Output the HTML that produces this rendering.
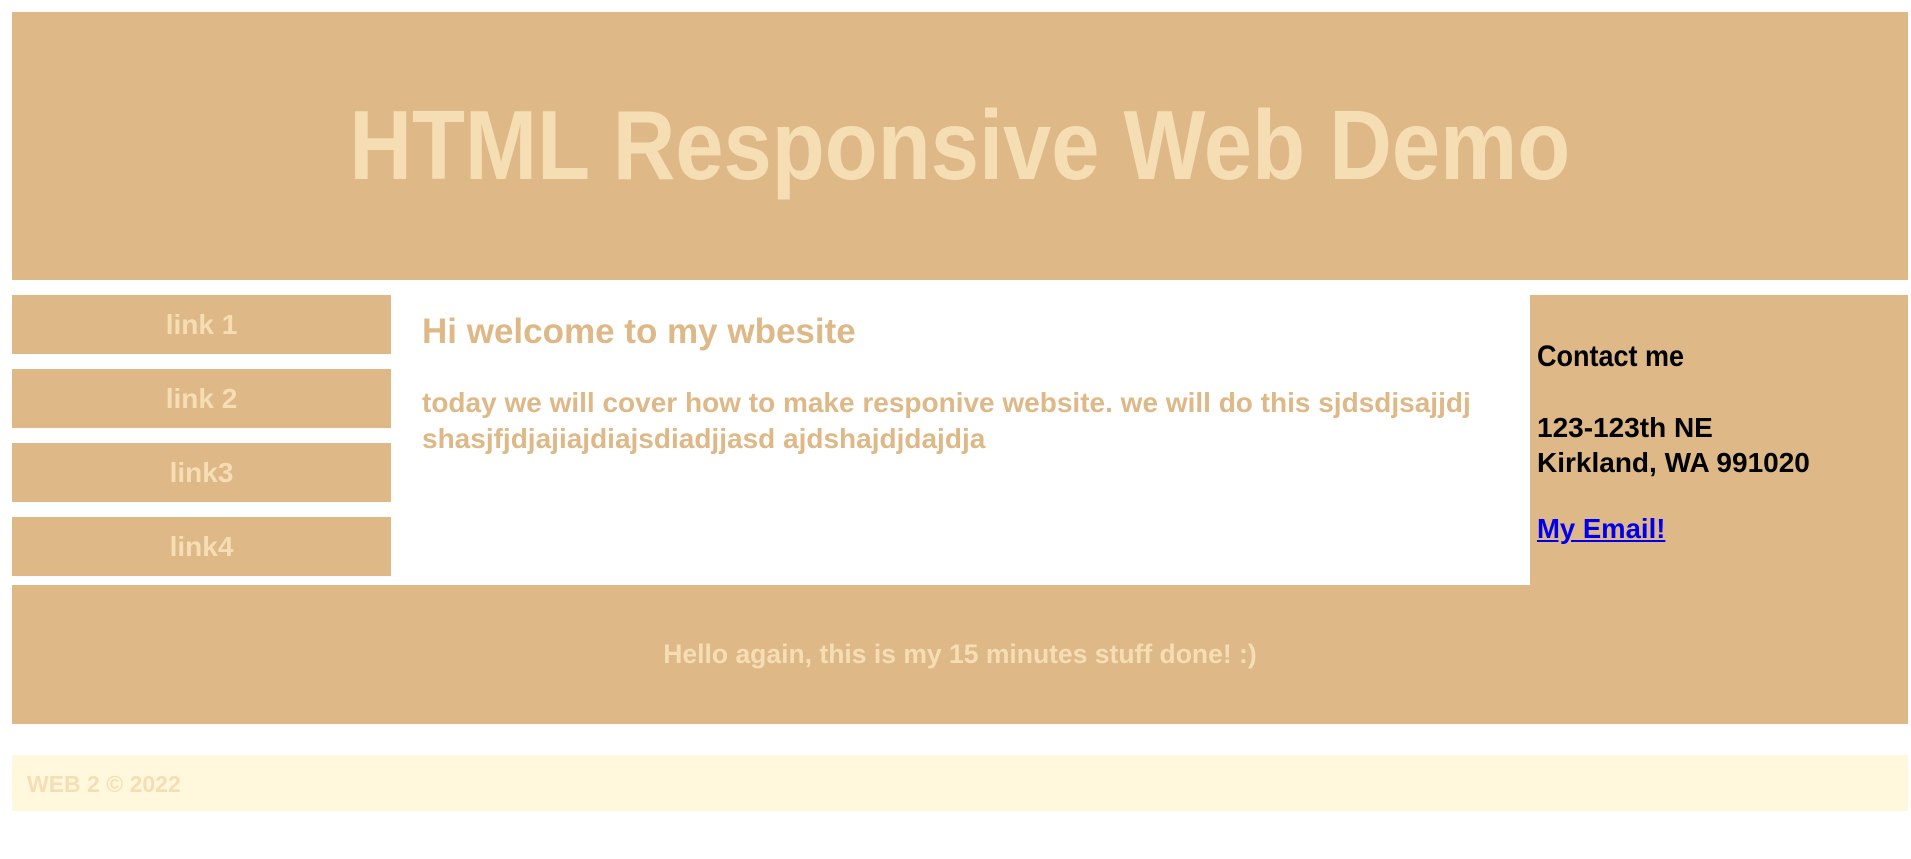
<!DOCTYPE html>
<html><head><meta charset="utf-8"><style>
body{margin:0;width:1911px;height:859px;background:#fff;position:relative;overflow:hidden;font-family:"Liberation Sans",Arial,sans-serif;font-weight:bold}
.b{position:absolute;background:#deb887}
.t{position:absolute;white-space:nowrap;transform-origin:0 0;line-height:1.15}
.c{position:absolute;white-space:nowrap;line-height:1;text-align:center}
.c span{display:inline-block}
</style></head><body>
<div class="b" style="left:12px;top:12px;width:1896px;height:268px"></div>
<div class="c" style="left:12px;width:1896px;top:96px;font-size:98px;color:#f5deb3"><span style="transform:scaleX(0.885)">HTML Responsive Web Demo</span></div>

<div class="b" style="left:12px;top:295px;width:379px;height:59px"></div>
<div class="b" style="left:12px;top:369px;width:379px;height:59px"></div>
<div class="b" style="left:12px;top:443px;width:379px;height:59px"></div>
<div class="b" style="left:12px;top:517px;width:379px;height:59px"></div>
<div class="c" style="left:12px;width:379px;top:311px;font-size:28px;color:#f5deb3"><span>link 1</span></div>
<div class="c" style="left:12px;width:379px;top:385px;font-size:28px;color:#f5deb3"><span>link 2</span></div>
<div class="c" style="left:12px;width:379px;top:459px;font-size:28px;color:#f5deb3"><span>link3</span></div>
<div class="c" style="left:12px;width:379px;top:533px;font-size:28px;color:#f5deb3"><span>link4</span></div>

<div class="t" style="left:422px;top:312px;font-size:35px;color:#deb887">Hi welcome to my wbesite</div>
<div class="t" style="left:422px;top:385px;font-size:28px;color:#deb887;line-height:36px">today we will cover how to make responive website. we will do this sjdsdjsajjdj<br>shasjfjdjajiajdiajsdiadjjasd ajdshajdjdajdja</div>

<div class="b" style="left:1530px;top:295px;width:378px;height:429px"></div>
<div class="b" style="left:12px;top:585px;width:1896px;height:139px"></div>
<div class="t" style="left:1537px;top:340px;font-size:30px;color:#000;transform:scaleX(0.9)">Contact me</div>
<div class="t" style="left:1537px;top:410px;font-size:28px;color:#000;line-height:35px">123-123th NE<br>Kirkland, WA 991020</div>
<div class="t" style="left:1537px;top:513px;font-size:27.5px;color:#00e;text-decoration:underline">My Email!</div>
<div class="c" style="left:12px;width:1896px;top:641px;font-size:26.5px;color:#f5deb3"><span>Hello again, this is my 15 minutes stuff done! :)</span></div>

<div style="position:absolute;left:12px;top:755px;width:1896px;height:56px;background:#fff8dc"></div>
<div class="t" style="left:27px;top:771px;font-size:23px;color:#f5deb3">WEB 2 © 2022</div>
</body></html>
